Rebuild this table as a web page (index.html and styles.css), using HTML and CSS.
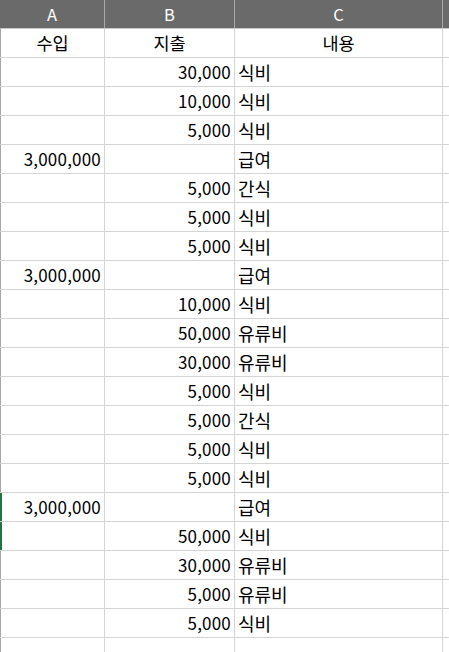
FILE: index.html
```html
<!DOCTYPE html>
<html lang="ko">
<head>
<meta charset="utf-8">
<link rel="stylesheet" href="styles.css">
</head>
<body>
<div class="sheet">
  <div class="row head"><div class="c a">A</div><div class="c b">B</div><div class="c cc">C</div><div class="c d"></div></div>
  <div class="row"><div class="c a center">수입</div><div class="c b center">지출</div><div class="c cc center">내용</div><div class="c d"></div></div>
  <div class="row"><div class="c a"></div><div class="c b num">30,000</div><div class="c cc txt">식비</div><div class="c d"></div></div>
  <div class="row"><div class="c a"></div><div class="c b num">10,000</div><div class="c cc txt">식비</div><div class="c d"></div></div>
  <div class="row"><div class="c a"></div><div class="c b num">5,000</div><div class="c cc txt">식비</div><div class="c d"></div></div>
  <div class="row"><div class="c a num">3,000,000</div><div class="c b"></div><div class="c cc txt">급여</div><div class="c d"></div></div>
  <div class="row"><div class="c a"></div><div class="c b num">5,000</div><div class="c cc txt">간식</div><div class="c d"></div></div>
  <div class="row"><div class="c a"></div><div class="c b num">5,000</div><div class="c cc txt">식비</div><div class="c d"></div></div>
  <div class="row"><div class="c a"></div><div class="c b num">5,000</div><div class="c cc txt">식비</div><div class="c d"></div></div>
  <div class="row"><div class="c a num">3,000,000</div><div class="c b"></div><div class="c cc txt">급여</div><div class="c d"></div></div>
  <div class="row"><div class="c a"></div><div class="c b num">10,000</div><div class="c cc txt">식비</div><div class="c d"></div></div>
  <div class="row"><div class="c a"></div><div class="c b num">50,000</div><div class="c cc txt">유류비</div><div class="c d"></div></div>
  <div class="row"><div class="c a"></div><div class="c b num">30,000</div><div class="c cc txt">유류비</div><div class="c d"></div></div>
  <div class="row"><div class="c a"></div><div class="c b num">5,000</div><div class="c cc txt">식비</div><div class="c d"></div></div>
  <div class="row"><div class="c a"></div><div class="c b num">5,000</div><div class="c cc txt">간식</div><div class="c d"></div></div>
  <div class="row"><div class="c a"></div><div class="c b num">5,000</div><div class="c cc txt">식비</div><div class="c d"></div></div>
  <div class="row"><div class="c a"></div><div class="c b num">5,000</div><div class="c cc txt">식비</div><div class="c d"></div></div>
  <div class="row sel"><div class="c a num">3,000,000</div><div class="c b"></div><div class="c cc txt">급여</div><div class="c d"></div></div>
  <div class="row sel"><div class="c a"></div><div class="c b num">50,000</div><div class="c cc txt">식비</div><div class="c d"></div></div>
  <div class="row"><div class="c a"></div><div class="c b num">30,000</div><div class="c cc txt">유류비</div><div class="c d"></div></div>
  <div class="row"><div class="c a"></div><div class="c b num">5,000</div><div class="c cc txt">유류비</div><div class="c d"></div></div>
  <div class="row"><div class="c a"></div><div class="c b num">5,000</div><div class="c cc txt">식비</div><div class="c d"></div></div>
  <div class="row"><div class="c a"></div><div class="c b"></div><div class="c cc"></div><div class="c d"></div></div>
</div>
</body>
</html>
```
FILE: styles.css
```css
html, body {
  margin: 0;
  padding: 0;
  background: #ffffff;
  overflow: hidden;
}
.sheet {
  width: 449px;
  font-family: "Noto Sans CJK KR", "Noto Sans", sans-serif;
  font-size: 17px;
  color: #000000;
}
.row {
  display: grid;
  grid-template-columns: 105px 130px 208px 1fr;
  height: 29px;
  box-sizing: border-box;
  border-bottom: 1px solid #d4d4d4;
}
.c {
  box-sizing: border-box;
  border-right: 1px solid #d4d4d4;
  display: flex;
  align-items: flex-end;
  padding: 0 3px 3px 3px;
  line-height: 22px;
  white-space: nowrap;
  overflow: hidden;
}
.c.a {
  border-left: 1px solid #a6a6a6;
}
.row.sel .c.a {
  border-left: 2px solid #217346;
}
.c.d {
  border-right: none;
}
.num {
  justify-content: flex-end;
  letter-spacing: 0.2px;
}
.txt {
  justify-content: flex-start;
  padding-left: 3px;
  font-size: 18px;
}
.center {
  justify-content: center;
  font-size: 17.5px;
}
.row.head {
  background: #6a6a6a;
  border-bottom: 1px solid #c8c8c8;
}
.row.head .c {
  color: #ffffff;
  justify-content: center;
  border-right: 1px solid #a9a9a9;
  border-left: none;
  font-size: 16.5px;
}
.row.head .c.d {
  border-right: none;
}
```
